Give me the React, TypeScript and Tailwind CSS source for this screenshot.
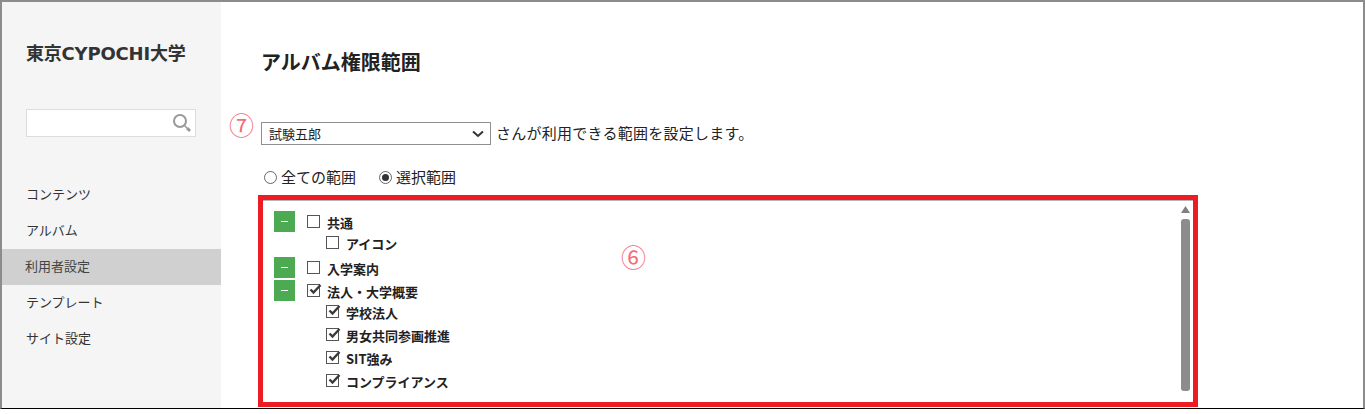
import React from 'react';

const jp = "font-['Meiryo','Noto_Sans_CJK_JP','Liberation_Sans',sans-serif]";

const menu = ['コンテンツ', 'アルバム', '利用者設定', 'テンプレート', 'サイト設定'];

const Check = ({ checked }: { checked?: boolean }) => (
  <span className="relative block w-[13px] h-[13px] shrink-0 border border-[#555] bg-white">
    {checked && (
      <svg className="absolute left-[0px] top-[-3px]" width="15" height="14" viewBox="0 0 15 14" fill="none">
        <path d="M2.5 7.5 L5.5 10.5 L12.5 3" stroke="#3a3a3a" strokeWidth="2.4" />
      </svg>
    )}
  </span>
);

const Toggle = () => (
  <span className="flex items-center justify-center w-[21px] h-[21px] shrink-0 bg-[#4cab52]">
    <span className="block w-[7px] h-px bg-white" />
  </span>
);

const Parent = ({ label, checked, className }: { label: string; checked?: boolean; className?: string }) => (
  <div className={`flex items-center h-[21px] ${className ?? ''}`}>
    <Toggle />
    <span className="ml-3"><Check checked={checked} /></span>
    <span className="ml-[7px] mt-[2px] text-[13px] font-bold text-[#222]">{label}</span>
  </div>
);

const Child = ({ label, checked, className }: { label: string; checked?: boolean; className?: string }) => (
  <div className={`flex items-center h-[21px] pl-[52px] ${className ?? ''}`}>
    <Check checked={checked} />
    <span className="ml-[7px] mt-[2px] text-[13px] font-bold text-[#222]">{label}</span>
  </div>
);

const Radio = ({ label, on }: { label: string; on?: boolean }) => (
  <label className="flex items-center">
    <span className="flex items-center justify-center w-[13px] h-[13px] rounded-full border border-[#666] bg-white">
      {on && <span className="block w-[7px] h-[7px] rounded-full bg-[#333]" />}
    </span>
    <span className="ml-[4px] text-[15px] text-[#222]">{label}</span>
  </label>
);

export default function App() {
  return (
    <div className={`relative w-[1365px] h-[414px] overflow-hidden bg-white ${jp}`}>
      <div className="flex h-[409px] border-t-2 border-x-2 border-[#8c8c8c] border-b border-b-black">
        <aside className="w-[219px] shrink-0 bg-[#f5f5f5]">
          <h1 className="mt-[40px] ml-6 h-[24px] leading-[24px] text-[18px] font-bold text-[#333] whitespace-nowrap font-['DejaVu_Sans','Noto_Sans_CJK_JP',sans-serif] tracking-[-0.2px]">東京CYPOCHI大学</h1>
          <div className="relative mt-[43px] ml-6 w-[170px] h-[28px] border border-[#ddd] bg-white">
            <svg className="absolute right-[3px] top-[3px]" width="20" height="20" viewBox="0 0 20 20" fill="none">
              <circle cx="8" cy="8" r="6" stroke="#999" strokeWidth="2" />
              <path d="M12.5 12.5 L15 15" stroke="#999" strokeWidth="1.5" />
              <path d="M15 15 L18 18" stroke="#999" strokeWidth="3" />
            </svg>
          </div>
          <nav className="mt-[40px]">
            {menu.map((m) => (
              <div
                key={m}
                className={`h-9 leading-[34px] text-[13px] ${m === '利用者設定' ? 'pl-[23px] bg-[#d0d0d0] text-[#444]' : 'pl-6 text-[#333]'}`}
              >
                {m}
              </div>
            ))}
          </nav>
        </aside>

        <main className="relative flex-1 min-w-0 pl-10">
          <h2 className="mt-[46px] h-7 leading-7 text-[20px] font-bold text-[#222]">アルバム権限範囲</h2>
          <div className="mt-[46px] flex items-center h-[23px]">
            <div className="flex items-center justify-between w-[230px] h-[23px] pl-[7px] pr-[6px] border border-[#8f8f8f] bg-white">
              <span className="text-[13px] text-[#222]">試験五郎</span>
              <svg width="12" height="8" viewBox="0 0 12 8" fill="none">
                <path d="M1 1.5 L6 6 L11 1.5" stroke="#333" strokeWidth="2" />
              </svg>
            </div>
            <span className="ml-[5px] text-[15px] tracking-[0.25px] text-[#222]">さんが利用できる範囲を設定します。</span>
          </div>
          <div className="mt-[22px] ml-[3px] flex items-center gap-[23px] h-5">
            <Radio label="全ての範囲" />
            <Radio label="選択範囲" on />
          </div>

          <div className="relative mt-[8px] -ml-[3px] w-[940px] h-[212px] border-[5px] border-[#ed1c24] bg-white shadow-[inset_0_1px_0_#b5b5b5] pt-[11px] pl-[11px]">
            <Parent label="共通" />
            <Child label="アイコン" />
            <Parent label="入学案内" className="mt-[4px]" />
            <Parent label="法人・大学概要" checked className="mt-[2px]" />
            <Child label="学校法人" checked />
            <Child label="男女共同参画推進" checked className="mt-[2px]" />
            <Child label="SIT強み" checked className="mt-[2px]" />
            <Child label="コンプライアンス" checked className="mt-[2px]" />
            <div className="absolute right-[3px] top-[6px] bottom-[11px] w-[9px] flex flex-col items-center">
              <svg width="9" height="7" viewBox="0 0 9 7">
                <path d="M4.5 0 L9 7 L0 7 Z" fill="#808080" />
              </svg>
              <span className="block mt-[6px] w-[9px] flex-1 rounded-[3px] bg-[#8c8c8c]" />
            </div>
          </div>

          <span className="absolute left-[8px] top-[108px] text-[25px] leading-[28px] text-[#f26d75]">⑦</span>
          <span className="absolute left-[400px] top-[240px] text-[25px] leading-[28px] text-[#f26d75]">⑥</span>
        </main>
      </div>
    </div>
  );
}
